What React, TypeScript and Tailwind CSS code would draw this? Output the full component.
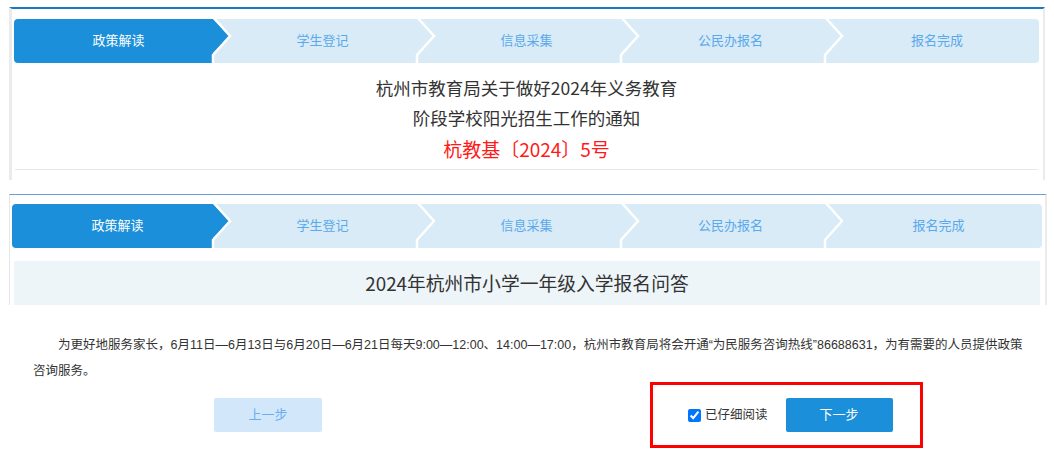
import React from "react";

const STEPS = ["政策解读", "学生登记", "信息采集", "公民办报名", "报名完成"];
const ACTIVE = "#1b8fd9";
const IDLE = "#d8ebf6";

// white chevron between two steps, tip painted in the left step's colour
const Chevron = ({ cur, next }: { cur: string; next: string }) => (
  <svg className="absolute top-0 right-[-17px] z-10" width="24" height="44" viewBox="0 0 24 44">
    <rect x="2" y="0" width="5" height="44" fill={next} />
    <polygon points="1,0 2,0 19,17 2,34 1,34" fill={cur} />
    <polyline points="2,-2 19,17 2,36 2,46" fill="none" stroke="#ffffff" strokeWidth="2.5" />
  </svg>
);

const StepBar = ({ firstW }: { firstW: string }) => {
  const widths = [firstW, "w-[204px]", "w-[204px]", "w-[204px]", "flex-1"];
  return (
    <div className="flex h-[44px] font-['Liberation_Sans','Noto_Sans_CJK_SC',sans-serif] text-[13px]">
      {STEPS.map((s, i) => {
        const active = i === 0;
        const cur = active ? ACTIVE : IDLE;
        return (
          <div
            key={s}
            className={`relative flex h-full items-center justify-center pl-[5px] ${widths[i]} ${
              active ? "bg-[#1b8fd9] text-white rounded-l-[4px]" : "bg-[#d8ebf6] text-[#5aa9ec]"
            } ${i === 4 ? "rounded-r-[4px]" : ""}`}
          >
            <span>{s}</span>
            {i < 4 && <Chevron cur={cur} next={IDLE} />}
          </div>
        );
      })}
    </div>
  );
};

export default function App() {
  return (
    <div className="h-[457px] w-full overflow-hidden bg-white text-[#333333]">
      {/* first notice panel */}
      <div className="ml-[9px] mt-[7px] w-[1036px] border-t-2 border-l-[3px] border-r-2 border-t-[#1c7ac5] border-l-[#ebebeb] border-r-[#ebebeb] pl-[2px] pr-[4px] pt-[10px] pb-[10px]">
        <StepBar firstW="w-[204px]" />
        <div className="mt-[10px] text-center font-['Noto_Sans_CJK_SC',sans-serif]">
          <div className="text-[17.5px] leading-[30px] text-[#333333]">杭州市教育局关于做好2024年义务教育</div>
          <div className="text-[17.5px] leading-[30px] text-[#333333]">阶段学校阳光招生工作的通知</div>
          <div className="text-[19px] leading-[32px] text-[#ff1a1a]">杭教基〔2024〕5号</div>
        </div>
        <div className="ml-[1px] mr-[1px] mt-[4px] border-t border-[#e8e8e8]" />
      </div>

      {/* second panel */}
      <div className="ml-[9px] mt-[14px] w-[1038px] border-t border-l border-r-2 border-t-[#6a9fd4] border-l-[#e6e6e6] border-r-[#ebebeb] pl-[2px] pr-[3px] pt-[9px]">
        <StepBar firstW="w-[206px]" />
        <div className="mx-[2px] mt-[13px] flex h-[44px] items-center justify-center bg-[#edf5f9] font-['Noto_Sans_CJK_SC',sans-serif] text-[18.8px] text-[#333333]">
          2024年杭州市小学一年级入学报名问答
        </div>
      </div>

      {/* notice text */}
      <p className="mt-[27px] pl-[33px] pr-[22px] indent-[2em] font-['Liberation_Sans','Noto_Sans_CJK_SC',sans-serif] text-[12.5px] leading-[26px] text-[#333333]">
        为更好地服务家长，6月11日—6月13日与6月20日—6月21日每天9:00—12:00、14:00—17:00，杭州市教育局将会开通“为民服务咨询热线”86688631，为有需要的人员提供政策咨询服务。
      </p>

      {/* actions */}
      <div className="-mt-[2px] flex items-center font-['Liberation_Sans','Noto_Sans_CJK_SC',sans-serif] text-[13px]">
        <div className="flex w-[536px] justify-center">
          <button className="h-[34px] w-[108px] rounded-[2px] bg-[#d3e7fb] text-[#6aaef0]">上一步</button>
        </div>
        <div className="flex flex-1 justify-center pr-[17px]">
          <div className="flex h-[66px] w-[273px] items-center border-[3px] border-[#ff0000] pl-[35px]">
            <label className="flex items-center gap-[4px] text-[12.5px] text-[#333333]">
              <input type="checkbox" defaultChecked className="m-0 h-[13px] w-[13px]" />
              <span>已仔细阅读</span>
            </label>
            <button className="ml-[18px] h-[34px] w-[107px] rounded-[2px] bg-[#1b8fd9] text-white">下一步</button>
          </div>
        </div>
      </div>
    </div>
  );
}
